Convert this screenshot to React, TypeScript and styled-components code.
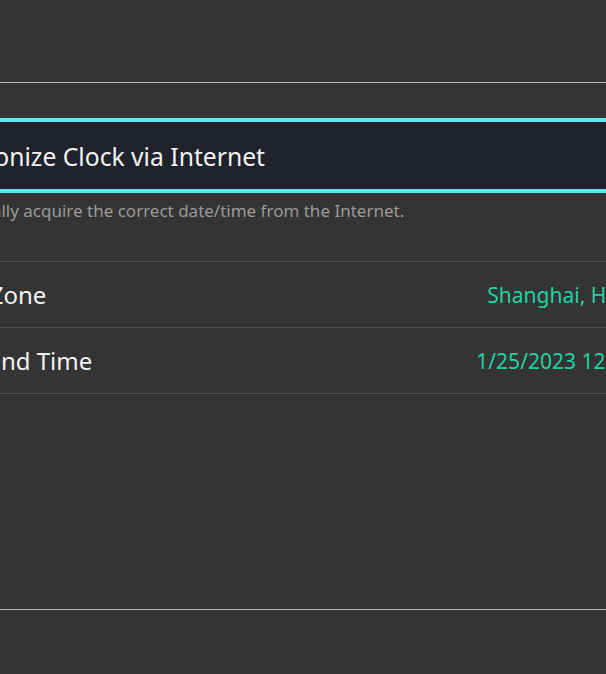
import styled, { createGlobalStyle } from "styled-components";

const GlobalStyle = createGlobalStyle`
    html, body {
        margin: 0;
        padding: 0;
        background: #343434;
        overflow: hidden;
    }
    body {
        font-family: "Noto Sans", "Open Sans", sans-serif;
    }
`;

const Screen = styled.div`
    width: 606px;
    height: 674px;
    background: #343434;
    display: flex;
    flex-direction: column;
    overflow: hidden;
`;

const Header = styled.div`
    height: 82px;
    flex-shrink: 0;
    border-bottom: 1px solid #b9b9b9;
`;

const Body = styled.div`
    flex: 1;
    padding-top: 35px;
`;

// the list runs past both edges of the window, as in the cropped shot
const List = styled.div`
    width: 820px;
    margin-left: -100px;
    display: flex;
    flex-direction: column;
`;

const SelectedItem = styled.div`
    height: 65px;
    display: flex;
    align-items: center;
    padding: 2px 0 0 12px;
    background: #20232b;
    border: 4px solid #5fe7f3;
    border-radius: 3px;
    color: #f2f2f2;
    font-size: 24.7px;
`;

const Description = styled.p`
    margin: 0;
    padding: 6px 0 0 10px;
    height: 69px;
    color: #9a9a9a;
    font-size: 17px;
    box-sizing: border-box;
    border-bottom: 1px solid #4e4e4e;
`;

const Row = styled.div`
    height: 66px;
    display: flex;
    align-items: center;
    justify-content: space-between;
    padding: 0 18px 0 28px;
    border-bottom: 1px solid #4e4e4e;
    box-sizing: border-box;
`;

const Label = styled.span`
    color: #f2f2f2;
    font-size: 24px;
`;

const Value = styled.span`
    color: #1fd3a3;
    font-size: 21px;
`;

const Footer = styled.div`
    height: 64px;
    flex-shrink: 0;
    border-top: 1px solid #b9b9b9;
`;

export default function App() {
    return (
        <>
            <GlobalStyle />
            <Screen>
                <Header />
                <Body>
                    <List>
                        <SelectedItem>Synchronize Clock via Internet</SelectedItem>
                        <Description>
                            Automatically acquire the correct date/time from the Internet.
                        </Description>
                        <Row>
                            <Label>Time Zone</Label>
                            <Value>Shanghai, Hong Kong</Value>
                        </Row>
                        <Row>
                            <Label>Date and Time</Label>
                            <Value>1/25/2023 12:34:56 PM</Value>
                        </Row>
                    </List>
                </Body>
                <Footer />
            </Screen>
        </>
    );
}
